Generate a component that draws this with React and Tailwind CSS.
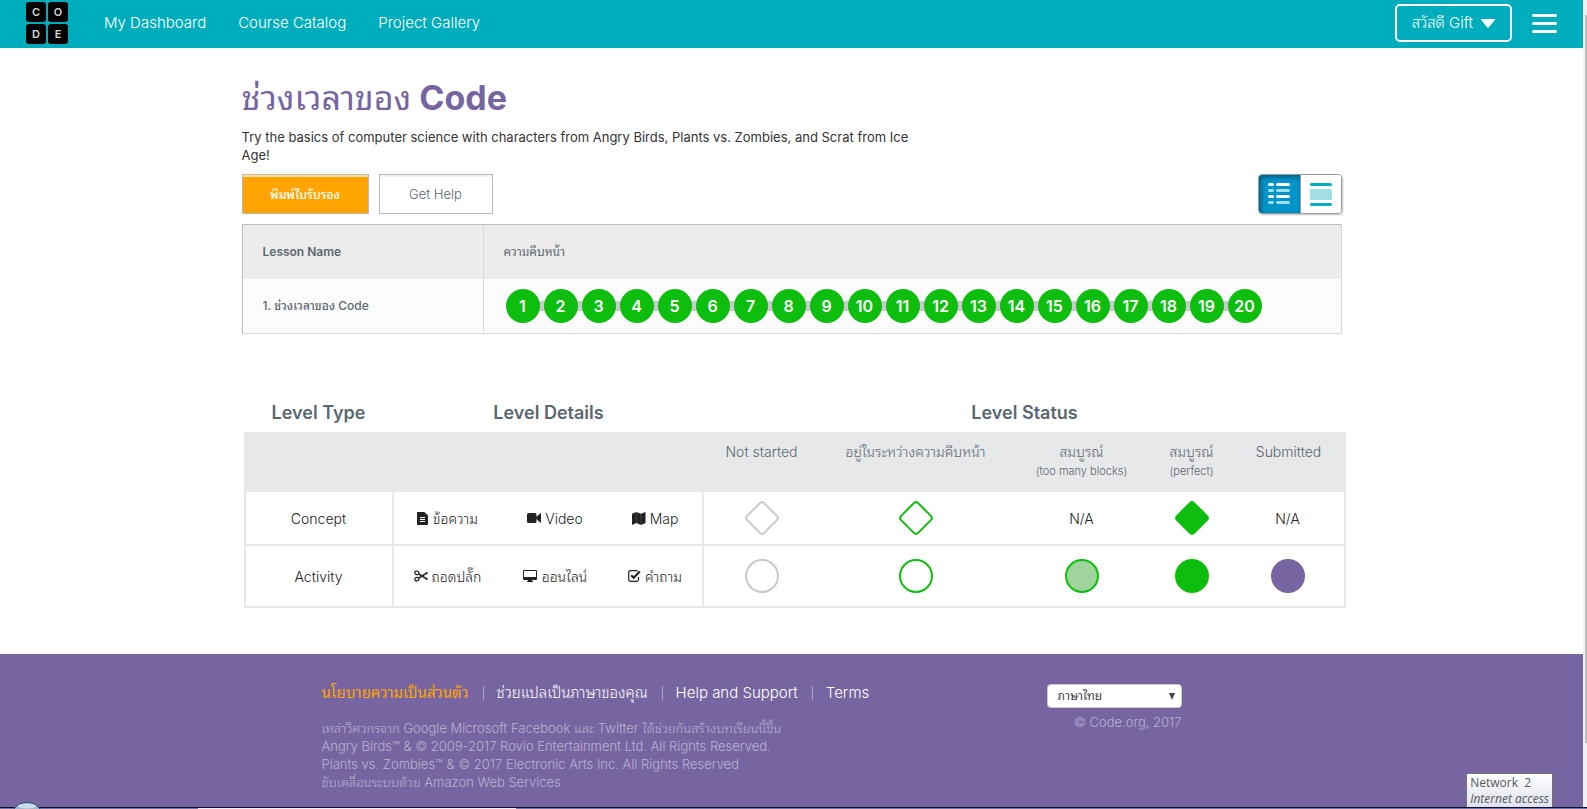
import React from "react";

const SANS =
  "font-['Inter','Noto_Sans_Thai_Looped','Loma','Garuda','Waree','FreeSans','Noto_Sans_Thai','Noto_Sans',sans-serif]";

function Logo() {
  return (
    <a href="#home" aria-label="Code.org" className="grid shrink-0 grid-cols-2 gap-0.5">
      {["C", "O", "D", "E"].map((letter) => (
        <span
          key={letter}
          className="flex size-5 items-center justify-center rounded-[3px] bg-black text-[11px] font-semibold leading-none text-[#d5d5d5]"
        >
          {letter}
        </span>
      ))}
    </a>
  );
}

function Header() {
  return (
    <header className="flex h-12 items-center bg-[#00adbc] px-[26px] pb-0.5 text-white">
      <Logo />
      <nav className="ml-9 flex flex-1 gap-8 text-[15px] font-light">
        <a href="#dashboard">My Dashboard</a>
        <a href="#courses">Course Catalog</a>
        <a href="#gallery">Project Gallery</a>
      </nav>
      <button
        type="button"
        className="flex h-[38px] items-center gap-2 rounded-[5px] border-2 border-white px-[15px] text-[15px] font-light"
      >
        สวัสดี Gift
        <svg width="14" height="9" viewBox="0 0 14 9" aria-hidden="true">
          <path d="M.5 0h13q1 0 .3.9L7.600 8.500q-.6.6-1.200 0L.2.900Q-.4 0 .5 0z" fill="currentColor" />
        </svg>
      </button>
      <button type="button" aria-label="Menu" className="ml-5 flex flex-col gap-[5px]">
        <span className="h-[3px] w-[25px] rounded-sm bg-white" />
        <span className="h-[3px] w-[25px] rounded-sm bg-white" />
        <span className="h-[3px] w-[25px] rounded-sm bg-white" />
      </button>
    </header>
  );
}

function ViewToggle() {
  return (
    <div className="flex h-10 rounded-[4px] border border-[#949ca2] shadow-[1px_1px_2px_rgba(0,0,0,0.25)]">
      <button
        type="button"
        aria-label="Summary view"
        aria-pressed="true"
        className="flex w-[41px] items-center justify-center rounded-l-[3px] bg-[#0094ca] shadow-[inset_2px_2px_5px_rgba(0,0,0,0.4)]"
      >
        <svg width="22" height="22" viewBox="0 0 22 22" aria-hidden="true">
          <g fill="#fff">
            <rect x="0" y="0" width="6" height="3" rx="1.5" />
            <rect x="8" y="0" width="14" height="3" rx="1.5" />
            <rect x="0" y="12" width="6" height="3" rx="1.5" />
            <rect x="8" y="12" width="14" height="3" rx="1.5" />
          </g>
          <g fill="#a0dfe6">
            <rect x="0" y="6" width="6" height="3" rx="1.5" />
            <rect x="8" y="6" width="14" height="3" rx="1.5" />
            <rect x="0" y="18" width="6" height="3" rx="1.5" />
            <rect x="8" y="18" width="14" height="3" rx="1.5" />
          </g>
        </svg>
      </button>
      <button
        type="button"
        aria-label="Detail view"
        aria-pressed="false"
        className="flex w-[41px] items-center justify-center rounded-r-[3px] border-l border-[#949ca2] bg-white"
      >
        <svg width="22" height="24" viewBox="0 0 22 24" aria-hidden="true">
          <rect x="0" y="1" width="22" height="3" rx="1.5" fill="#00adbc" />
          <rect x="0" y="7" width="22" height="11" rx="1.5" fill="#a0dfe6" />
          <rect x="0" y="21" width="22" height="3" rx="1.5" fill="#00adbc" />
        </svg>
      </button>
    </div>
  );
}

const LEVELS = Array.from({ length: 20 }, (_, i) => i + 1);

function LessonTable() {
  return (
    <table className="mt-2.5 w-full table-fixed border-separate border-spacing-0 border border-l-[#bbbbbb] border-t-[#bbbbbb] border-r-[#d8d8d8] border-b-[#d8d8d8] text-left text-[12px] text-[#5b6770]">
      <colgroup>
        <col className="w-[241px]" />
        <col />
      </colgroup>
      <thead>
        <tr className="h-[54px] bg-[#ececec]">
          <th className="border-r border-[#d8d8d8] px-5 font-semibold">Lesson Name</th>
          <th className="px-5 font-normal">ความคืบหน้า</th>
        </tr>
      </thead>
      <tbody>
        <tr className="h-[54px] bg-[#fcfcfc]">
          <td className="border-r border-[#d8d8d8] px-5 font-medium">1. ช่วงเวลาของ Code</td>
          <td className="px-[22px]">
            <ol className="isolate flex items-center">
              {LEVELS.map((n) => (
                <li key={n} className="flex items-center">
                  {n > 1 && <span className="-z-10 -mx-1 h-2.5 w-3 bg-[#c6cacd]" />}
                  <a
                    href={"#level-" + n}
                    className="flex size-[34px] items-center justify-center rounded-full bg-[#0ebe0e] text-base font-semibold text-white"
                  >
                    {n}
                  </a>
                </li>
              ))}
            </ol>
          </td>
        </tr>
      </tbody>
    </table>
  );
}

const ICONS = {
  text: (
    <svg width="12" height="13" viewBox="0 0 12 13" aria-hidden="true">
      <path d="M1 0h6.500L11 3.500V12.200a.8.8 0 0 1-.8.8H.8a.8.8 0 0 1-.8-.8V.8A.8.8 0 0 1 1 0z" fill="currentColor" />
      <path d="M3 5.500h5M3 7.500h5M3 9.500h5" stroke="#fff" strokeWidth="1" />
    </svg>
  ),
  video: (
    <svg width="14" height="10" viewBox="0 0 14 10" aria-hidden="true">
      <path d="M1.500 0h6.500a1.500 1.500 0 0 1 1.500 1.500V4L13 .5h1v9h-1L9.500 6v2.500A1.500 1.500 0 0 1 8 10H1.500A1.500 1.500 0 0 1 0 8.500v-7A1.500 1.500 0 0 1 1.500 0z" fill="currentColor" />
    </svg>
  ),
  map: (
    <svg width="14" height="13" viewBox="0 0 14 13" aria-hidden="true">
      <path d="M0 1.800 4.300 0 9 1.800 13.500 0v11L9 13 4.300 11 0 13z" fill="currentColor" />
      <path d="M4.400 0v11M9 1.800V13" stroke="#fff" strokeWidth=".15" />
    </svg>
  ),
  scissors: (
    <svg width="14" height="12" viewBox="0 0 14 12" fill="none" stroke="currentColor" aria-hidden="true">
      <ellipse cx="2.800" cy="2.800" rx="2.100" ry="1.700" strokeWidth="1.300" transform="rotate(25 2.800 2.800)" />
      <ellipse cx="2.800" cy="9.200" rx="2.100" ry="1.700" strokeWidth="1.300" transform="rotate(-25 2.800 9.200)" />
      <path d="M4.600 3.900 13.600 9.600M4.600 8.100 13.600 2.400" strokeWidth="1.700" />
    </svg>
  ),
  desktop: (
    <svg width="15" height="12" viewBox="0 0 15 12" aria-hidden="true">
      <path fillRule="evenodd" d="M1 0h12a1 1 0 0 1 1 1v8a1 1 0 0 1-1 1H9v1h1v1H4v-1h1v-1H1a1 1 0 0 1-1-1V1a1 1 0 0 1 1-1zM1 1v6h12V1z" fill="currentColor" />
    </svg>
  ),
  check: (
    <svg width="13" height="12" viewBox="0 0 13 12" fill="none" stroke="currentColor" aria-hidden="true">
      <path d="M10.500 7v2.500a1.800 1.800 0 0 1-1.800 1.800H2.500A1.800 1.800 0 0 1 .7 9.500v-7A1.800 1.800 0 0 1 2.500.7h6.200l1 .3" strokeWidth="1.200" />
      <path d="M3.200 5.200 5.700 7.700 11.800 1.600" strokeWidth="2.100" />
    </svg>
  ),
};

function Detail({ icon, children }) {
  return (
    <span className="flex items-center justify-center gap-1">
      {ICONS[icon]}
      {children}
    </span>
  );
}

function Diamond({ className }) {
  return <span className={"mx-auto block size-[26px] rotate-45 rounded-[4px] border-2 " + className} />;
}

function Dot({ className }) {
  return <span className={"mx-auto block size-[34px] rounded-full border-2 " + className} />;
}

const EDGE = "border-[#e7e8ea] border-b-2";

function Legend() {
  return (
    <table className="mt-[58px] ml-0.5 w-[calc(100%+2px)] table-fixed border-separate border-spacing-0 text-center text-[14px] font-light text-[#222222]">
      <colgroup>
        <col className="w-[150px]" />
        <col className="w-[108px]" />
        <col className="w-[107px]" />
        <col className="w-[95px]" />
        <col className="w-[116px]" />
        <col className="w-[192px]" />
        <col className="w-[140px]" />
        <col className="w-[80px]" />
        <col className="w-[114px]" />
      </colgroup>
      <thead className="text-[#5b6770]">
        <tr className="h-10 text-lg">
          <th className="pt-0.5 font-semibold">Level Type</th>
          <th colSpan={3} className="pt-0.5 font-semibold">Level Details</th>
          <th colSpan={5} className="pt-0.5 font-semibold">Level Status</th>
        </tr>
        <tr className="h-[60px] bg-[#e7e8ea] align-top leading-5">
          <td />
          <td colSpan={3} />
          <th className="pt-2.5 font-light">Not started</th>
          <th className="pt-2.5 font-light">อยู่ในระหว่างความคืบหน้า</th>
          <th className="pt-2.5 font-light">
            สมบูรณ์
            <span className="block text-[11px] leading-[18px]">(too many blocks)</span>
          </th>
          <th className="pt-2.5 font-light">
            สมบูรณ์
            <span className="block text-[11px] leading-[18px]">(perfect)</span>
          </th>
          <th className="pt-2.5 font-light">Submitted</th>
        </tr>
      </thead>
      <tbody>
        <tr className="h-[54px]">
          <td className={EDGE + " border-x-2"}>Concept</td>
          <td className={EDGE}><Detail icon="text">ข้อความ</Detail></td>
          <td className={EDGE}><Detail icon="video">Video</Detail></td>
          <td className={EDGE + " border-r-2"}><Detail icon="map">Map</Detail></td>
          <td className={EDGE}><Diamond className="border-[#c6cacd] bg-white" /></td>
          <td className={EDGE}><Diamond className="border-[#0ebe0e] bg-white" /></td>
          <td className={EDGE}>N/A</td>
          <td className={EDGE}><Diamond className="border-[#0ebe0e] bg-[#0ebe0e]" /></td>
          <td className={EDGE + " border-r-2"}>N/A</td>
        </tr>
        <tr className="h-[62px]">
          <td className={EDGE + " border-x-2"}>Activity</td>
          <td className={EDGE}><Detail icon="scissors">ถอดปลั๊ก</Detail></td>
          <td className={EDGE}><Detail icon="desktop">ออนไลน์</Detail></td>
          <td className={EDGE + " border-r-2"}><Detail icon="check">คำถาม</Detail></td>
          <td className={EDGE}><Dot className="border-[#c6cacd] bg-white" /></td>
          <td className={EDGE}><Dot className="border-[#0ebe0e] bg-white" /></td>
          <td className={EDGE}><Dot className="border-[#0ebe0e] bg-[#9fd49f]" /></td>
          <td className={EDGE}><Dot className="border-[#0ebe0e] bg-[#0ebe0e]" /></td>
          <td className={EDGE + " border-r-2"}><Dot className="border-[#7665a0] bg-[#7665a0]" /></td>
        </tr>
      </tbody>
    </table>
  );
}

function Footer() {
  return (
    <footer className="mt-[46px] flex-1 bg-[#7665a0] pt-[30px] pb-4">
      <div className="mx-auto flex w-full max-w-[940px] justify-between pr-20">
        <div>
          <ul className="flex h-[18px] items-center text-[15px] font-light text-white [&>li+li]:ml-3.5 [&>li+li]:border-l [&>li+li]:border-[#ada3c6] [&>li+li]:pl-[13px] [&>li]:leading-[14px]">
            <li><a href="#privacy" className="font-normal text-[#ffa400]">นโยบายความเป็นส่วนตัว</a></li>
            <li><a href="#translate">ช่วยแปลเป็นภาษาของคุณ</a></li>
            <li><a href="#support">Help and Support</a></li>
            <li><a href="#terms">Terms</a></li>
          </ul>
          <div className="mt-[17px] text-[13px] font-light leading-[18px] text-[#bbb2d0]">
            <p>เหล่าวิศวกรจาก Google Microsoft Facebook และ Twitter ได้ช่วยกันสร้างบทเรียนนี้ขึ้น</p>
            <p>Angry Birds™ &amp; © 2009-2017 Rovio Entertainment Ltd. All Rights Reserved.</p>
            <p>Plants vs. Zombies™ &amp; © 2017 Electronic Arts Inc. All Rights Reserved</p>
            <p>ขับเคลื่อนระบบด้วย Amazon Web Services</p>
          </div>
        </div>
        <div className="flex flex-col items-end">
          <div className="grid items-center">
            <select
              aria-label="Language"
              className="col-start-1 row-start-1 h-6 w-[135px] appearance-none rounded-[4px] border border-[#cccccc] bg-white px-2.5 text-[12px] text-[#444444]"
            >
              <option>ภาษาไทย</option>
            </select>
            <svg width="6" height="7" viewBox="0 0 6 7" className="pointer-events-none col-start-1 row-start-1 mr-[7px] justify-self-end" aria-hidden="true">
              <path d="M0 0h6L3 7z" fill="#444" />
            </svg>
          </div>
          <p className="mt-[5px] text-[13px] font-light leading-[18px] text-[#bbb2d0]">© Code.org, 2017</p>
        </div>
      </div>
    </footer>
  );
}

function Taskbar() {
  return (
    <div className="pointer-events-none absolute inset-x-0 bottom-0 overflow-hidden">
      <div className="flex items-end justify-between">
        <svg width="30" height="7" viewBox="0 0 30 7" className="z-10 ml-3 -mb-0.5" aria-hidden="true">
          <circle cx="15" cy="17" r="16.500" fill="#9fb8cc" stroke="#1d4f7c" strokeWidth="1" />
          <ellipse cx="15" cy="4" rx="9" ry="2.500" fill="#cddce8" />
        </svg>
        <div
          role="tooltip"
          className="mr-[34px] rounded-t-[2px] border border-b-0 border-[#767676] bg-linear-to-b from-white to-[#dfe2ee] px-[3px] pt-px font-['Open_Sans',sans-serif] text-[12px] leading-4 text-[#575757]"
        >
          <p>Network&nbsp; 2</p>
          <p className="italic">Internet access</p>
        </div>
      </div>
      <div className="flex h-0.5 border-t border-[#0d0d2b] bg-[#6d74a8]">
        <div className="ml-[198px] w-[318px] bg-[#eeeaf6]" />
      </div>
    </div>
  );
}

export default function App() {
  return (
    <div className={"relative flex min-h-screen bg-white " + SANS}>
      <div className="flex min-w-0 flex-1 flex-col">
        <Header />
        <main className="mx-auto w-full max-w-[1100px]">
          <h1 className="mt-8 text-[34px] font-bold leading-9 text-[#7665a0]">
            <span className="font-normal">ช่วงเวลาของ</span> Code
          </h1>
          <p className="mt-3 max-w-[690px] text-[13px] leading-[18px] text-[#333333]">
            Try the basics of computer science with characters from Angry Birds, Plants vs. Zombies, and Scrat from Ice Age!
          </p>
          <div className="mt-2.5 flex gap-2.5">
            <button
              type="button"
              className="h-10 w-[127px] border border-[#bbbbbb] bg-[#ffa400] pt-0.5 text-[12px] font-medium text-white shadow-[inset_0_2px_0_rgba(255,255,255,0.63)]"
            >
              พิมพ์ใบรับรอง
            </button>
            <button
              type="button"
              className="mr-auto h-10 w-[114px] border border-[#bbbbbb] bg-white pt-0.5 text-[13px] font-light text-[#5b6770] shadow-[inset_0_2px_0_#f0f0f0]"
            >
              Get Help
            </button>
            <ViewToggle />
          </div>
          <LessonTable />
          <Legend />
        </main>
        <Footer />
      </div>
      <div className="w-1 shrink-0 bg-[#f1f1f1] pt-[15px] pl-0.5">
        <div className="h-[728px] bg-[#c1c1c1]" />
      </div>
      <Taskbar />
    </div>
  );
}
